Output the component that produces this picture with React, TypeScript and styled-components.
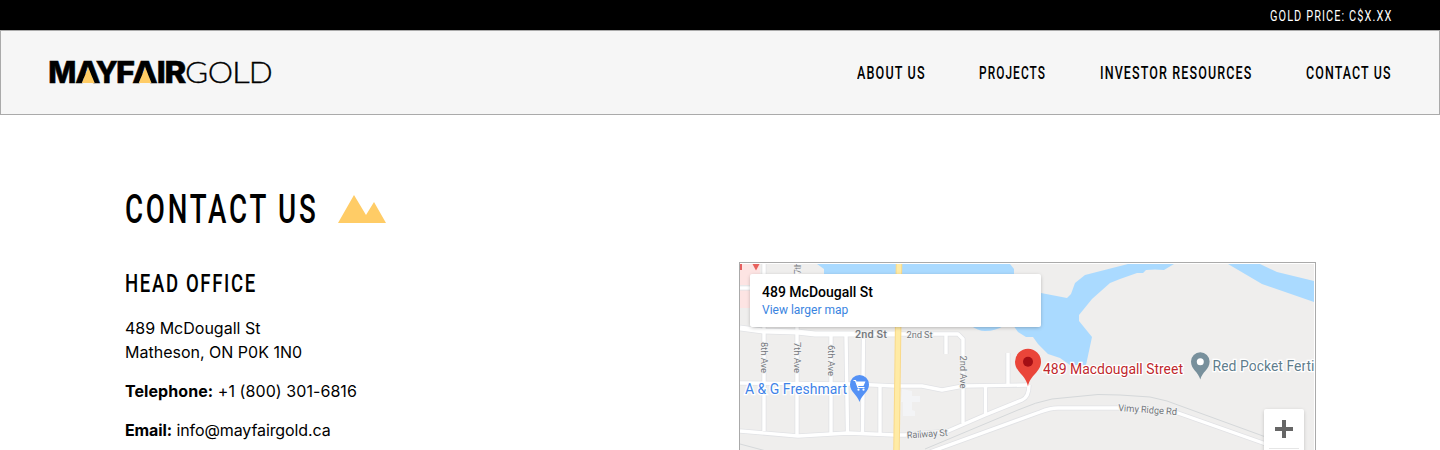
import React from "react";
import styled, { createGlobalStyle } from "styled-components";

const GlobalStyle = createGlobalStyle`
  * { box-sizing: border-box; }
  body { margin: 0; background: #fff; color: #000; font-family: Inter, sans-serif; }
  h1, h2, p { margin: 0; font-weight: 400; }
`;

const Page = styled.div`
  height: 450px;
  overflow: hidden;
`;

/* Condensed display lettering: wide letters squeezed into a known width. */
const CondensedBox = styled.span<{ $width: number }>`
  display: block;
  flex: none;
  width: ${(p) => p.$width}px;
  white-space: nowrap;
`;
const CondensedText = styled.span<{ $size: number; $scale: number; $spacing: number; $weight: number }>`
  display: inline-block;
  font-family: Roboto, sans-serif;
  font-size: ${(p) => p.$size}px;
  font-weight: ${(p) => p.$weight};
  line-height: 1.2;
  letter-spacing: ${(p) => p.$spacing}em;
  transform: scaleX(${(p) => p.$scale});
  transform-origin: left center;
`;

type CondensedProps = {
  width: number;
  size: number;
  scale?: number;
  spacing?: number;
  weight?: number;
  children: React.ReactNode;
};
const Condensed = ({ width, size, scale = 0.68, spacing = 0.09, weight = 460, children }: CondensedProps) => (
  <CondensedBox $width={width}>
    <CondensedText $size={size} $scale={scale} $spacing={spacing} $weight={weight}>
      {children}
    </CondensedText>
  </CondensedBox>
);

const TopBar = styled.div`
  display: flex;
  align-items: center;
  justify-content: flex-end;
  height: 30px;
  padding: 0 48px 0 0;
  background: #000;
  color: #fff;
`;

const Header = styled.header`
  display: flex;
  align-items: center;
  justify-content: space-between;
  height: 85px;
  padding: 0 47.5px 0 47px;
  background: #f6f6f6;
  border: 1px solid #aaa;
`;

const LogoSvg = styled.svg`
  display: block;
`;

const Nav = styled.nav`
  display: flex;
  gap: 54px;
`;

const Main = styled.main`
  padding: 70px 124px 0 125px;
`;

const TitleRow = styled.h1`
  display: flex;
  align-items: center;
  gap: 21px;
  height: 48px;
`;
const TitleText = styled.span`
  padding-top: 2px;
`;

const Columns = styled.div`
  display: flex;
  justify-content: space-between;
  margin-top: 29px;
`;

const Office = styled.section`
  padding-top: 5px;
`;

const Copy = styled.p<{ $tracking?: number }>`
  margin-top: 15px;
  font-size: 16px;
  line-height: 24px;
  letter-spacing: ${(p) => p.$tracking ?? 0}px;
`;
const Address = styled(Copy)`
  margin-top: 17px;
`;

const MapFrame = styled.div`
  position: relative;
  width: 577px;
  height: 400px;
  padding: 1px 1px 1px 0;
  border: 1px solid #aaa;
  font-family: Roboto, sans-serif;
`;
const MapSvg = styled.svg`
  display: block;
  font-family: Roboto, sans-serif;
`;

const PlaceCard = styled.div`
  position: absolute;
  left: 10px;
  top: 11px;
  width: 291px;
  height: 53px;
  padding: 10px 12px;
  background: #fff;
  border-radius: 2px;
  box-shadow: 0 1px 4px -1px rgba(0, 0, 0, 0.35);
`;
const PlaceName = styled.div`
  font-size: 14px;
  font-weight: 500;
  line-height: 17px;
`;
const PlaceLink = styled.div`
  font-size: 12px;
  line-height: 19px;
  color: #3a84df;
`;

const ZoomControl = styled.div`
  position: absolute;
  left: 524px;
  top: 146px;
  width: 40px;
  height: 81px;
  background: #fff;
  border-radius: 2px;
  box-shadow: 0 1px 4px -1px rgba(0, 0, 0, 0.3);
`;
const ZoomButton = styled.div`
  display: flex;
  align-items: center;
  justify-content: center;
  height: 40px;
  margin: 0 5px;
  border-bottom: 1px solid #e6e6e6;
`;

const boldLetters: [string, number, number][] = [
  ["M", 48.3, 28.1],
  ["A", 75.3, 25.2],
  ["Y", 95.8, 22],
  ["F", 116, 19],
  ["A", 132.3, 25.4],
  ["I", 156.8, 9],
  ["R", 164.6, 21.8],
];
const lightLetters: [string, number, number][] = [
  ["G", 185, 23.2],
  ["O", 207.8, 25.4],
  ["L", 231.8, 18],
  ["D", 248.7, 24],
];

const Logo = () => (
  <LogoSvg width="226" height="28" viewBox="48 59 226 28" overflow="visible">
    <g fontFamily="Inter" fontWeight="800" fontSize="29.6" stroke="#000" strokeWidth="0.5">
      {boldLetters.map(([ch, x, w]) => (
        <text key={x} x={x} y="82.600" textLength={w} lengthAdjust="spacingAndGlyphs">
          {ch}
        </text>
      ))}
    </g>
    <path d="M88.200 67.500L94.700 83H81.800ZM145.200 67.500L151.500 83H138.700Z" fill="#ffcc66" />
    <g fontFamily="Lato" fontWeight="300" fontSize="30" stroke="#000" strokeWidth="0.3">
      {lightLetters.map(([ch, x, w]) => (
        <text key={x} x={x} y="82.600" textLength={w} lengthAdjust="spacingAndGlyphs">
          {ch}
        </text>
      ))}
    </g>
  </LogoSvg>
);

const roads = [
  "M740 383L852 384L895 386H922L942 390L963 386L1029 385",
  "M740 431L798 436L848 433L895 435L905 435L948 431L985 415L1022 400Q1029 397 1029 385",
  "M764 264V431M797 264V435M831 335V433M846 335L847.500 433M863.500 335L862.500 433M880 387V433",
  "M895 334H958L963 339V423M946 335V354M1008 353V384M985.500 386V414",
  "M930 452L1040 412Q1050 408 1058 408H1125L1178 413L1263 443L1290 454",
  "M740 288H760",
];

const MapDrawing = () => (
  <MapSvg width="574" height="396" viewBox="740 264 574 396">
    <rect x="740" y="264" width="574" height="396" fill="#efeeed" />
    <path d="M740 264H760V285H740ZM740 289H750V308H740Z" fill="#fde4e3" />
    <path
      fill="#aadaff"
      d="M817 264H1010L1014 269V285L1041 293L1067 298L1071 294L1075 283L1085 275L1128 264H1174L1164 270L1155 269.500L1146 270L1143 273L1137 273L1120 279L1110 283L1092 299L1079 315V321L1092 337L1086 365H1070L1060 358L1048 354L1038 344L1033 337H1026L1018 332L1013 325H1005Q996 331 985 331Q978 331 970 325L824 290V269Z"
    />
    <path fill="#aadaff" d="M1228 264L1262 284L1314 302V281L1277 272L1260 264Z" />
    <path d="M902 389L912 391V396H920V402H912V410L915 411V416H903V402H901Z" fill="#f3f4f6" />
    <path
      d="M925 449L1018 410Q1036 402 1052 399L1098 394.500L1120 395L1150 397L1167 401L1263 436L1300 450M740 444L770 452"
      fill="none"
      stroke="#d5d8da"
    />
    <g fill="none" strokeLinejoin="round">
      {roads.map((d) => (
        <path key={d} d={d} stroke="#e1e2e5" strokeWidth="5" />
      ))}
      <path d="M740 328L763 331L797 332L815 334H900" stroke="#e1e2e5" strokeWidth="6.500" />
      {roads.map((d) => (
        <path key={d} d={d} stroke="#fff" strokeWidth="3.400" />
      ))}
      <path d="M740 328L763 331L797 332L815 334H900" stroke="#fff" strokeWidth="5" />
      <path d="M899 264L896.500 450" stroke="#f9d98a" strokeWidth="6.500" />
      <path d="M899 264L896.500 450" stroke="#ffeba5" strokeWidth="4.500" />
    </g>

    <path d="M741 264V270" stroke="#d33" strokeWidth="1.500" />
    <path d="M752.500 264H759.500L756 270.500Z" fill="#e8605b" />

    <g fill="#74787d" stroke="#f2f2f2" strokeWidth="2" paintOrder="stroke" fontSize="9.500">
      <text x="855" y="338" fontSize="11" fontWeight="500" textLength="32" fill="#73777c">2nd St</text>
      <text x="906.500" y="337.500" textLength="26">2nd St</text>
      <text transform="translate(760.500 342) rotate(90)" textLength="31">8th Ave</text>
      <text transform="translate(794 342) rotate(90)" textLength="31">7th Ave</text>
      <text transform="translate(827.500 345) rotate(90)" textLength="31">6th Ave</text>
      <text transform="translate(960 355.500) rotate(90)" textLength="33">2nd Ave</text>
      <text transform="translate(800.500 274) rotate(-90)" fontSize="9" textLength="12">7th</text>
      <text transform="translate(907 438.500) rotate(-4)" textLength="41">Railway St</text>
      <text transform="translate(1118 411) rotate(4)" textLength="59">Vimy Ridge Rd</text>
    </g>
    <g stroke="#fff" strokeWidth="2.500" paintOrder="stroke" fontSize="14">
      <text x="745" y="394" fill="#3f83e8" textLength="102">A &amp; G Freshmart</text>
      <text x="1043" y="373.500" fill="#c0282d" textLength="140">489 Macdougall Street</text>
      <text x="1212.500" y="371" fill="#5f7d8c" textLength="102">Red Pocket Ferti</text>
    </g>

    <path d="M859.500 402C857 394 850 392 850 384.500A9.500 9.500 0 0 1 869 384.500C869 392 862 394 859.500 402Z" fill="#5491f5" />
    <path d="M853.500 380.500H855.500L858 387.500H864.500" fill="none" stroke="#fff" strokeWidth="1.200" />
    <path d="M856 381.500H865.500L863.500 386H857.500Z" fill="#fff" />
    <circle cx="858.500" cy="389.700" r="1.100" fill="#fff" />
    <circle cx="863.500" cy="389.700" r="1.100" fill="#fff" />

    <path d="M1028 386.500C1026 375 1015 372 1015 361.700A13 13 0 0 1 1041 361.700C1041 372 1030 375 1028 386.500Z" fill="#ea4539" />
    <circle cx="1028" cy="361.700" r="5" fill="#a50e14" />

    <path d="M1200.300 379.500C1198.500 372 1191 369.500 1191 361.500A9.300 9.300 0 0 1 1209.600 361.500C1209.600 369.500 1202 372 1200.300 379.500Z" fill="#78909c" />
    <circle cx="1200.300" cy="361.800" r="3.500" fill="#fff" />
  </MapSvg>
);

export default function App() {
  return (
    <Page>
      <GlobalStyle />
      <TopBar>
        <Condensed width={122} size={15.5} scale={0.705} weight={420} spacing={0.1}>
          GOLD PRICE: C$X.XX
        </Condensed>
      </TopBar>
      <Header>
        <Logo />
        <Nav>
          <Condensed width={68} size={18} scale={0.7}>ABOUT US</Condensed>
          <Condensed width={67} size={18} scale={0.66}>PROJECTS</Condensed>
          <Condensed width={152} size={18} scale={0.695}>INVESTOR RESOURCES</Condensed>
          <Condensed width={86} size={18} scale={0.69}>CONTACT US</Condensed>
        </Nav>
      </Header>
      <Main>
        <TitleRow>
          <TitleText>
            <Condensed width={192} size={40} spacing={0.1} scale={0.692}>CONTACT US</Condensed>
          </TitleText>
          <svg width="48" height="28" viewBox="0 0 48 28">
            <path d="M0 28L16 0L28 20L36 7L48 28Z" fill="#ffcc66" />
          </svg>
        </TitleRow>
        <Columns>
          <Office>
            <h2>
              <Condensed width={140} size={26.5} scale={0.699}>HEAD OFFICE</Condensed>
            </h2>
            <Address>
              489 McDougall St
              <br />
              Matheson, ON P0K 1N0
            </Address>
            <Copy $tracking={0.07}>
              <strong>Telephone:</strong> +1 (800) 301-6816
            </Copy>
            <Copy $tracking={-0.1}>
              <strong>Email:</strong> info@mayfairgold.ca
            </Copy>
          </Office>
          <MapFrame>
            <MapDrawing />
            <PlaceCard>
              <PlaceName>489 McDougall St</PlaceName>
              <PlaceLink>View larger map</PlaceLink>
            </PlaceCard>
            <ZoomControl>
              <ZoomButton>
                <svg width="18" height="18" viewBox="0 0 18 18">
                  <path d="M9 0V18M0 9H18" stroke="#666" strokeWidth="4" />
                </svg>
              </ZoomButton>
            </ZoomControl>
          </MapFrame>
        </Columns>
      </Main>
    </Page>
  );
}
